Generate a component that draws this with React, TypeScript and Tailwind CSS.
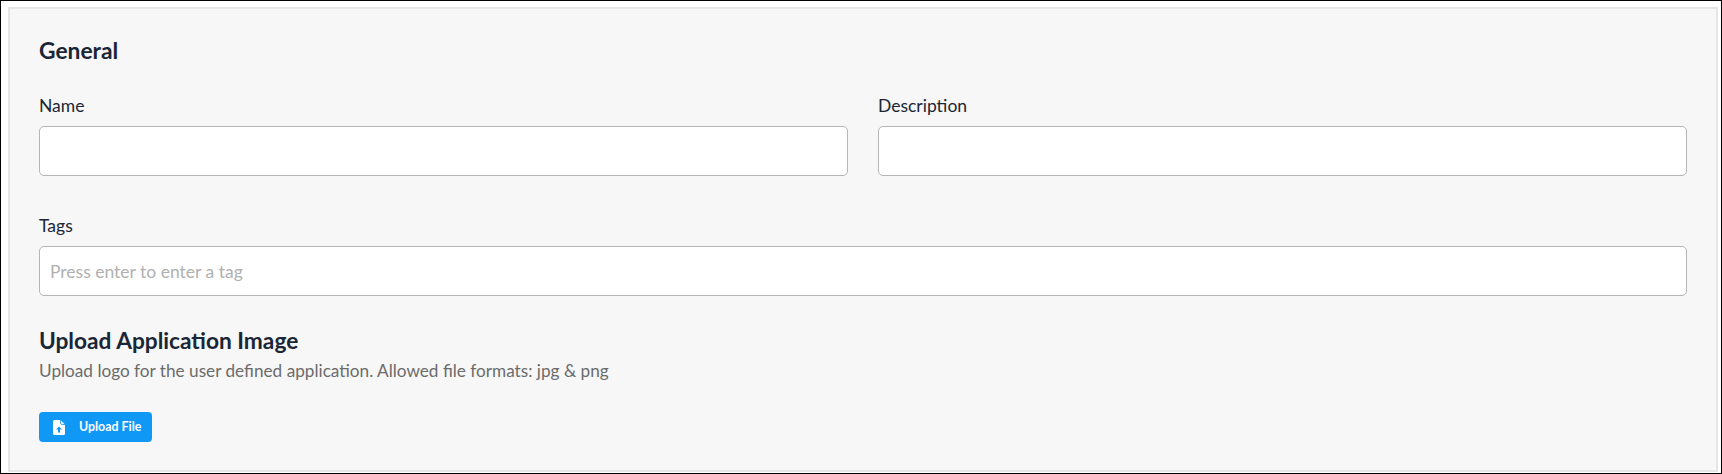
export default function App() {
  return (
    <div className="h-[474px] w-[1722px] bg-white border border-black pt-[6px] pl-[7px] pr-[3px] pb-[1px] font-['Lato',sans-serif] overflow-hidden">
      <div className="h-full border-2 border-[#e6e6e6] bg-[#f7f7f7] pl-[29px] pr-[29px] pt-[28px]">
        <h2 className="text-[22.8px] leading-[26px] font-bold text-[#1a2636]">General</h2>
        <div className="mt-[30px] grid grid-cols-2 gap-x-[30px]">
          <div>
            <label className="block text-[17.5px] leading-[26px] text-[#1a2636]">Name</label>
            <input className="mt-[7px] block h-[50px] w-full rounded-[5px] border border-[#b5b5b5] bg-white" />
          </div>
          <div>
            <label className="block text-[17.5px] leading-[26px] text-[#1a2636]">Description</label>
            <input className="mt-[7px] block h-[50px] w-full rounded-[5px] border border-[#b5b5b5] bg-white" />
          </div>
        </div>
        <div className="mt-[37px]">
          <label className="block text-[17.5px] leading-[26px] text-[#1a2636]">Tags</label>
          <input placeholder="Press enter to enter a tag" className="mt-[7px] block h-[50px] w-full rounded-[5px] border border-[#b5b5b5] bg-white px-[10px] text-[17.5px] placeholder:text-[#b0b0b0]" />
        </div>
        <h2 className="mt-[31px] text-[22.7px] leading-[28px] font-bold text-[#1a2636]">Upload Application Image</h2>
        <p className="mt-[3px] text-[17.2px] leading-[26px] text-[#6b6b6b]">Upload logo for the user defined application. Allowed file formats: jpg &amp; png</p>
        <button className="mt-[28px] flex h-[30px] w-[113px] items-center rounded-[4px] bg-[#1098f7] pl-[14px] text-[12.4px] font-bold text-white">
          <svg viewBox="0 0 12 15" className="h-[15px] w-[12px]">
            <path d="M1.5 0H7.5L12 4.5V13.5A1.5 1.5 0 0 1 10.5 15H1.5A1.5 1.5 0 0 1 0 13.5V1.5A1.5 1.5 0 0 1 1.5 0Z" fill="#fff" />
            <path d="M7.6 0V3.2A1.2 1.2 0 0 0 8.8 4.4H12" fill="none" stroke="#1098f7" strokeWidth="0.9" />
            <path d="M6 6.4L9 9.4H7V12.4H5V9.4H3Z" fill="#1098f7" />
          </svg>
          <span className="ml-[14px]">Upload File</span>
        </button>
      </div>
    </div>
  );
}
